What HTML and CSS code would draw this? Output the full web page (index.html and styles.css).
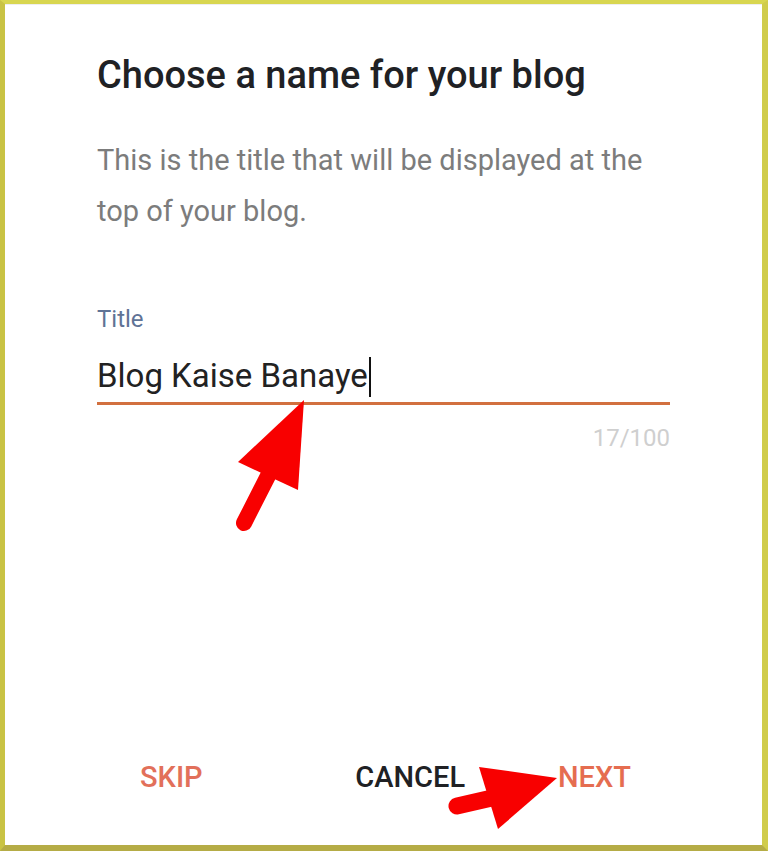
FILE: index.html
```html
<!DOCTYPE html>
<html lang="en">
<head>
  <meta charset="UTF-8">
  <title>Choose a name for your blog</title>
  <link rel="stylesheet" href="styles.css">
</head>
<body>

  <div class="marco">
    <div class="dialogo">
      <h1 class="titulo">Choose a name for your blog</h1>
      <p class="ayuda">This is the title that will be displayed at the top of your blog.</p>

      <div class="campo">
        <label class="etiqueta">Title</label>
        <div class="entrada">Blog Kaise Banaye<span class="cursor"></span></div>
        <div class="contador">17/100</div>
      </div>

      <div class="acciones">
        <button class="btn btn-skip">SKIP</button>
        <div class="acciones-der">
          <button class="btn btn-cancel">CANCEL</button>
          <button class="btn btn-next">NEXT</button>
        </div>
      </div>
    </div>

    <!-- flechas rojas encima de la captura -->
    <svg class="flechas" width="768" height="851" viewBox="0 0 768 851">
      <polygon points="304,400 238,462 298,490" fill="#f80000"/>
      <line x1="272" y1="468" x2="244" y2="523" stroke="#f80000" stroke-width="16" stroke-linecap="round"/>
      <polygon points="557,778 479,767 498,829" fill="#f80000"/>
      <line x1="505" y1="795" x2="457" y2="806" stroke="#f80000" stroke-width="17" stroke-linecap="round"/>
    </svg>
  </div>

</body>
</html>
```

FILE: styles.css
```css
:root {
  --color-texto: #202124;
  --color-gris: #7c7c7c;
  --color-etiqueta: #5f7396;
  --color-linea: #d2703f;
  --color-accion: #e2705a;
}

html, body {
  margin: 0;
  padding: 0;
}

body {
  font-family: Roboto, 'Noto Sans', sans-serif;
  background: #c4bd45;
}

.marco {
  position: relative;
  box-sizing: border-box;
  width: 768px;
  height: 851px;
  background: #fff;
  border-top: 4px solid #d8d650;
  border-left: 5px solid #c9c344;
  border-right: 6px solid #d0cc4c;
  border-bottom: 6px solid #b5ac46;
}

.dialogo {
  box-sizing: border-box;
  height: 100%;
  display: flex;
  flex-direction: column;
  padding: 48px 92px 51px 92px;
  border-top: 1px solid #eeeeee;
}

/* TEXTOS */
.titulo {
  margin: 0;
  font-size: 38px;
  line-height: 44px;
  font-weight: 500;
  color: var(--color-texto);
}

.ayuda {
  margin: 38px 0 0;
  font-size: 29px;
  line-height: 51px;
  color: var(--color-gris);
}

/* CAMPO */
.campo {
  margin-top: 68px;
  display: flex;
  flex-direction: column;
}

.etiqueta {
  font-size: 24px;
  line-height: 28px;
  color: var(--color-etiqueta);
}

.entrada {
  margin-top: 24px;
  padding-bottom: 5px;
  font-size: 33px;
  line-height: 38px;
  color: #222;
  border-bottom: 3px solid var(--color-linea);
}

.cursor {
  display: inline-block;
  width: 2px;
  height: 40px;
  margin-left: 1px;
  background: #111;
  vertical-align: -10px;
}

.contador {
  margin-top: 19px;
  text-align: right;
  font-size: 24px;
  line-height: 28px;
  color: #cfcfcf;
}

/* BOTONES */
.acciones {
  margin-top: auto;
  display: flex;
  align-items: center;
}

.acciones-der {
  margin-left: auto;
  margin-right: 39px;
  display: flex;
  gap: 93px;
}

.btn {
  padding: 0;
  background: none;
  border: none;
  font-family: inherit;
  font-size: 29px;
  line-height: 34px;
  font-weight: 500;
  cursor: pointer;
}

.btn-skip {
  margin-left: 43px;
  color: var(--color-accion);
}

.btn-cancel {
  color: var(--color-texto);
}

.btn-next {
  color: #e56d50;
}

.flechas {
  position: absolute;
  top: -4px;
  left: -5px;
  pointer-events: none;
}
```
